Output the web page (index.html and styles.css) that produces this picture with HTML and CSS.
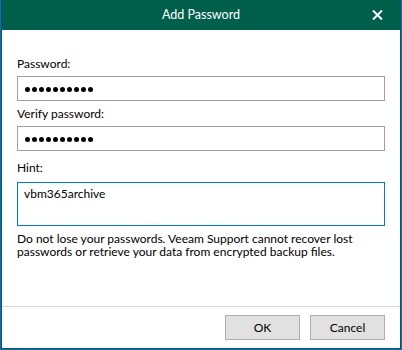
FILE: index.html
```html
<!DOCTYPE html>
<html>
<head>
<meta charset="utf-8">
<link rel="stylesheet" href="styles.css">
</head>
<body>
<div class="window">
  <div class="titlebar">
    <span class="title">Add Password</span>
    <span class="close"><svg width="11" height="10" viewBox="0 0 11 10"><path d="M1 0.5 L10 9.5 M10 0.5 L1 9.5" stroke="#fff" stroke-width="2" fill="none"/></svg></span>
  </div>
  <div class="content">
    <div class="label">Password:</div>
    <div class="field"><span class="dots"><i></i><i></i><i></i><i></i><i></i><i></i><i></i><i></i><i></i><i></i></span></div>
    <div class="label">Verify password:</div>
    <div class="field"><span class="dots"><i></i><i></i><i></i><i></i><i></i><i></i><i></i><i></i><i></i><i></i></span></div>
    <div class="label label-hint">Hint:</div>
    <div class="hint">vbm365archive</div>
    <p class="note">Do not lose your passwords. Veeam Support cannot recover lost passwords or retrieve your data from encrypted backup files.</p>
  </div>
  <div class="footer">
    <span class="btn">OK</span>
    <span class="btn">Cancel</span>
  </div>
</div>
</body>
</html>
```
FILE: styles.css
```css
html, body {
  margin: 0;
  padding: 0;
}
body {
  background: #1b63c6;
  width: 402px;
  height: 350px;
  overflow: hidden;
  font-family: Lato, "Noto Sans", sans-serif;
  font-size: 12px;
  color: #000;
}
.window {
  margin-left: 1px;
  width: 400px;
  height: 349px;
  box-sizing: border-box;
  border: 1px solid #005f4b;
  border-top: 0;
  background: #fff;
  display: flex;
  flex-direction: column;
}
.titlebar {
  height: 30px;
  margin: 0 -1px;
  background: #005f4b;
  color: #fff;
  display: flex;
  align-items: center;
  justify-content: center;
  position: relative;
  flex-shrink: 0;
  font-size: 12.5px;
}
.title {
  line-height: 16px;
  margin-top: -1px;
}
.close {
  position: absolute;
  left: 371px;
  top: 10px;
  width: 11px;
  height: 10px;
  display: block;
}
.close svg { display: block; }
.content {
  flex: 1;
  padding: 26px 15px 0 15px;
}
.label {
  line-height: 16px;
  height: 16px;
  margin-bottom: 4px;
}
.label-hint {
  margin-bottom: 6px;
}
.field {
  height: 25px;
  box-sizing: border-box;
  border: 1px solid #a0a0a0;
  margin-bottom: 5px;
  display: flex;
  align-items: center;
  padding-left: 7px;
}
.field + .label-hint { margin-top: 9px; }
.dots {
  display: flex;
  gap: 2px;
  margin-top: 1px;
}
.dots i {
  display: block;
  width: 5px;
  height: 5px;
  border-radius: 50%;
  background: #000;
}
.hint {
  height: 44px;
  box-sizing: border-box;
  border: 1px solid #0078d7;
  padding: 3px 6px;
  line-height: 16px;
}
.note {
  margin: 6px 0 0 0;
  line-height: 13px;
}
.footer {
  height: 42px;
  box-sizing: border-box;
  border-top: 1px solid #d6d6d6;
  padding: 8px 15px 0 0;
  display: flex;
  justify-content: flex-end;
  gap: 10px;
  flex-shrink: 0;
}
.btn {
  width: 75px;
  height: 25px;
  box-sizing: border-box;
  border: 1px solid #adadad;
  background: #e1e1e1;
  display: flex;
  align-items: center;
  justify-content: center;
  line-height: 16px;
}
```
